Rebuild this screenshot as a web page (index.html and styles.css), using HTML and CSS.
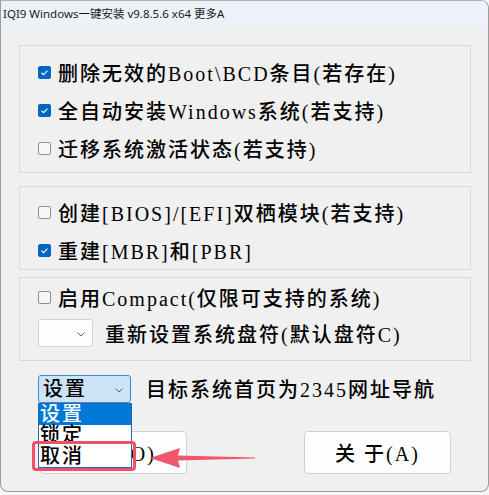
FILE: index.html
```html
<!DOCTYPE html>
<html lang="zh-CN">
<head>
<meta charset="UTF-8">
<meta name="viewport" content="width=device-width, initial-scale=1.0">
<title>IQI9 Windows一键安装</title>
<link rel="stylesheet" href="styles.css">
</head>
<body>
<div class="window">
    <div class="titlebar">IQI9 Windows一键安装 v9.8.5.6 x64 更多A</div>
    <div class="client">
        <div class="group group-one">
            <label class="row"><span class="box checked"><svg viewBox="0 0 13 13"><polyline points="3,6.8 5.4,9 10,4.2"/></svg></span>删除无效的Boot\BCD条目(若存在)</label>
            <label class="row"><span class="box checked"><svg viewBox="0 0 13 13"><polyline points="3,6.8 5.4,9 10,4.2"/></svg></span>全自动安装Windows系统(若支持)</label>
            <label class="row"><span class="box"></span>迁移系统激活状态(若支持)</label>
        </div>
        <div class="group group-two">
            <label class="row"><span class="box"></span>创建[BIOS]/[EFI]双栖模块(若支持)</label>
            <label class="row"><span class="box checked"><svg viewBox="0 0 13 13"><polyline points="3,6.8 5.4,9 10,4.2"/></svg></span>重建[MBR]和[PBR]</label>
        </div>
        <div class="group group-three">
            <label class="row"><span class="box"></span>启用Compact(仅限可支持的系统)</label>
            <div class="row row-combo">
                <div class="combo combo-small">
                    <svg class="chevron" viewBox="0 0 8 5"><polyline points="0.5,0.5 4,4 7.5,0.5"/></svg>
                </div>
                <span class="combo-label">重新设置系统盘符(默认盘符C)</span>
            </div>
        </div>
        <div class="home-row">
            <div class="combo-wrap">
                <div class="combo combo-open">
                    <span>设置</span>
                    <svg class="chevron" viewBox="0 0 8 5"><polyline points="0.5,0.5 4,4 7.5,0.5"/></svg>
                </div>
                <ul class="dropdown">
                    <li class="selected">设置</li>
                    <li>锁定</li>
                    <li>取消</li>
                </ul>
            </div>
            <span class="home-label">目标系统首页为2345网址导航</span>
        </div>
        <div class="buttons">
            <button class="btn">确 定(O)</button>
            <button class="btn">关 于(A)</button>
        </div>
    </div>
    <div class="mark-box"></div>
    <svg class="mark-arrow" viewBox="0 0 110 24">
        <polygon points="0,12 30,2 28,9.5 105,11.6 105,12.4 28,14.5 30,22"/>
    </svg>
</div>
</body>
</html>
```

FILE: styles.css
```css
body {
    margin: 0;
    padding: 0;
    background-color: #f7f7f7;
    font-family: "Liberation Serif", "Noto Sans CJK SC", serif;
}
.window {
    position: relative;
    width: 487px;
    height: 490px;
    background-color: #f0f0f0;
    border: 1px solid #9c9c9c;
    border-top-color: #b4b4b4;
    border-radius: 0 8px 8px 8px;
    overflow: hidden;
}
.titlebar {
    height: 25px;
    line-height: 25px;
    padding-left: 2px;
    background-color: #edf2f8;
    font-family: "Noto Sans", "Noto Sans CJK SC", sans-serif;
    font-size: 11.5px;
    color: #1a1a1a;
}
.client {
    padding: 19px 17px 0 18px;
}
.group {
    border: 1px solid #d9d9d9;
    padding-left: 18px;
    display: flex;
    flex-direction: column;
}
.group-one {
    padding-top: 7px;
    padding-bottom: 5px;
}
.group-two {
    margin-top: 13px;
    padding-top: 6px;
}
.group-three {
    margin-top: 7px;
    padding-bottom: 10px;
}
.row {
    height: 38px;
    display: flex;
    align-items: center;
    font-size: 20px;
    letter-spacing: 2px;
    color: #000;
    font-weight: 500;
}
.row-combo {
    height: 34px;
}
.box {
    width: 11px;
    height: 11px;
    border: 1px solid #8f8f8f;
    border-radius: 2px;
    background-color: #f6f6f6;
    margin-right: 7px;
    flex-shrink: 0;
    display: flex;
}
.box.checked {
    background-color: #0067c0;
    border-color: #0067c0;
}
.box svg {
    width: 11px;
    height: 11px;
    fill: none;
    stroke: #fff;
    stroke-width: 1.3;
}
.combo {
    position: relative;
    box-sizing: border-box;
    height: 28px;
    border-radius: 3px;
    display: flex;
    align-items: center;
}
.combo-small {
    width: 55px;
    background-color: #fdfdfd;
    border: 1px solid #d2d2d2;
    margin-right: 12px;
}
.chevron {
    position: absolute;
    right: 7px;
    top: 12px;
    width: 8px;
    height: 5px;
    fill: none;
    stroke: #606060;
    stroke-width: 1;
}
.home-row {
    margin-top: 13px;
    display: flex;
    align-items: center;
    padding-left: 19px;
    font-size: 20px;
    letter-spacing: 2px;
    font-weight: 500;
}
.combo-wrap {
    position: relative;
    margin-right: 15px;
}
.combo-open {
    width: 93px;
    background-color: #cce4f7;
    border: 1px solid #3c8ad0;
    padding-left: 4px;
}
.combo-open span {
    font-size: 20px;
    line-height: 20px;
}
.dropdown {
    position: absolute;
    top: 28px;
    left: 0;
    width: 94px;
    margin: 0;
    padding: 0;
    list-style: none;
    background-color: #fff;
    border: 1px solid #2a64b0;
    box-sizing: border-box;
    z-index: 2;
}
.dropdown li {
    height: 21px;
    line-height: 21px;
    padding-left: 1px;
    font-size: 20px;
    letter-spacing: 2px;
}
.dropdown li.selected {
    background-color: #0078d7;
    color: #fff;
}
.buttons {
    margin-top: 28px;
    display: flex;
    justify-content: space-between;
    padding: 0 20px 0 21px;
}
.btn {
    width: 147px;
    height: 43px;
    background-color: #fdfdfd;
    border: 1px solid #d0d0d0;
    border-radius: 4px;
    font-family: "Liberation Serif", "Noto Sans CJK SC", serif;
    font-size: 20px;
    font-weight: 500;
    letter-spacing: 2px;
    color: #000;
    padding: 0;
}
.mark-box {
    position: absolute;
    left: 31px;
    top: 440px;
    width: 98px;
    height: 24px;
    border: 3px solid #ef4f67;
    border-radius: 4px;
    z-index: 3;
}
.mark-arrow {
    position: absolute;
    left: 149px;
    top: 445px;
    width: 110px;
    height: 24px;
    fill: #f2566c;
    z-index: 3;
}
```
